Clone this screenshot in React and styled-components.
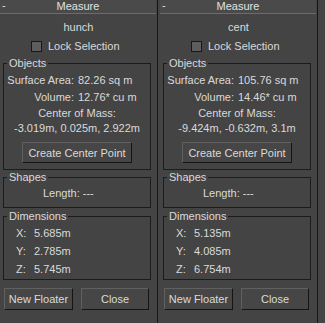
import React from "react";
import styled, { createGlobalStyle } from "styled-components";

const Global = createGlobalStyle`
  html, body {
    margin: 0;
    padding: 0;
    background: #444444;
  }
  body {
    font-family: "Liberation Sans", Arial, sans-serif;
    font-size: 11px;
    color: #dadada;
  }
`;

const measures = [
  {
    name: "hunch",
    area: "82.26 sq m",
    volume: "12.76* cu m",
    center: "-3.019m, 0.025m, 2.922m",
    dims: ["5.685m", "2.785m", "5.745m"],
  },
  {
    name: "cent",
    area: "105.76 sq m",
    volume: "14.46* cu m",
    center: "-9.424m, -0.632m, 3.1m",
    dims: ["5.135m", "4.085m", "6.754m"],
  },
];

const Measure = ({ data }) => (
  <Panel>
    <TitleBar>
      <Minus>-</Minus>
      Measure
    </TitleBar>
    <Name>{data.name}</Name>
    <CheckRow>
      <Check />
      Lock Selection
    </CheckRow>

    <Group $top={5} $bottom={6}>
      <Legend>Objects</Legend>
      <Pairs>
        <Label>Surface Area:</Label>
        <span>{data.area}</span>
        <Label>Volume:</Label>
        <span>{data.volume}</span>
      </Pairs>
      <Centered $top={2}>Center of Mass:</Centered>
      <Centered $top={1}>{data.center}</Centered>
      <ButtonRow>
        <Button $w={110} $h={21}>Create Center Point</Button>
      </ButtonRow>
    </Group>

    <Group $top={1} $bottom={7}>
      <Legend>Shapes</Legend>
      <Length>Length: ---</Length>
    </Group>

    <Group $top={2} $bottom={3}>
      <Legend>Dimensions</Legend>
      <Dims>
        {["X:", "Y:", "Z:"].map((axis, i) => (
          <React.Fragment key={axis}>
            <span>{axis}</span>
            <span>{data.dims[i]}</span>
          </React.Fragment>
        ))}
      </Dims>
    </Group>

    <Footer>
      <Button $w={69} $h={22}>New Floater</Button>
      <Button $w={68} $h={22}>Close</Button>
    </Footer>
  </Panel>
);

const App = () => (
  <>
    <Global />
    <Desk>
      {measures.map((m) => (
        <Measure key={m.name} data={m} />
      ))}
    </Desk>
  </>
);

const Desk = styled.div`
  display: flex;
  gap: 2px;
  height: 323px;
`;

const Panel = styled.div`
  width: 157px;
  height: 323px;
  border-right: 1px solid #161616;
  display: flex;
  flex-direction: column;
  white-space: nowrap;
`;

const TitleBar = styled.div`
  position: relative;
  height: 13px;
  width: 156px;
  line-height: 13px;
  text-align: center;
  background: #4a4a4a;
  border-bottom: 1px solid #6c6c6c;
  color: #e2e2e2;
`;

const Minus = styled.span`
  position: absolute;
  left: 2px;
  top: -1px;
`;

const Name = styled.div`
  text-align: center;
  margin-top: 6px;
  height: 14px;
  line-height: 14px;
`;

const CheckRow = styled.div`
  display: flex;
  align-items: center;
  gap: 6px;
  margin: 6px 0 0 31px;
  height: 12px;
  line-height: 12px;
`;

const Check = styled.span`
  width: 9px;
  height: 9px;
  background: #5d5d5d;
  border: 1px solid #181818;
`;

const Group = styled.fieldset`
  margin: ${(p) => p.$top}px 0 0 3px;
  width: 148px;
  box-sizing: border-box;
  padding: 0 0 ${(p) => p.$bottom}px 0;
  border: 1px solid #1c1c1c;
  min-width: 0;
`;

const Legend = styled.legend`
  margin-left: 3px;
  padding: 0 2px;
  line-height: 12px;
`;

const Pairs = styled.div`
  display: grid;
  grid-template-columns: 67px auto;
  column-gap: 4px;
  row-gap: 3px;
  padding-left: 3px;
  margin-top: 4px;
  line-height: 14px;
`;

const Label = styled.span`
  text-align: right;
`;

const Centered = styled.div`
  text-align: center;
  line-height: 14px;
  margin-top: ${(p) => p.$top}px;
`;

const ButtonRow = styled.div`
  display: flex;
  justify-content: center;
  margin-top: 7px;
`;

const Button = styled.button`
  width: ${(p) => p.$w}px;
  height: ${(p) => p.$h}px;
  padding: 0;
  background: #464646;
  color: #dadada;
  font-family: inherit;
  font-size: 11px;
  border: 1px solid;
  border-color: #606060 #141414 #141414 #606060;
`;

const Length = styled.div`
  padding-left: 39px;
  margin-top: 3px;
  line-height: 14px;
`;

const Dims = styled.div`
  display: grid;
  grid-template-columns: 18px auto;
  row-gap: 4px;
  padding-left: 12px;
  margin-top: 4px;
  line-height: 14px;
`;

const Footer = styled.div`
  display: flex;
  gap: 8px;
  margin: 8px 0 0 4px;
`;

export default App;
